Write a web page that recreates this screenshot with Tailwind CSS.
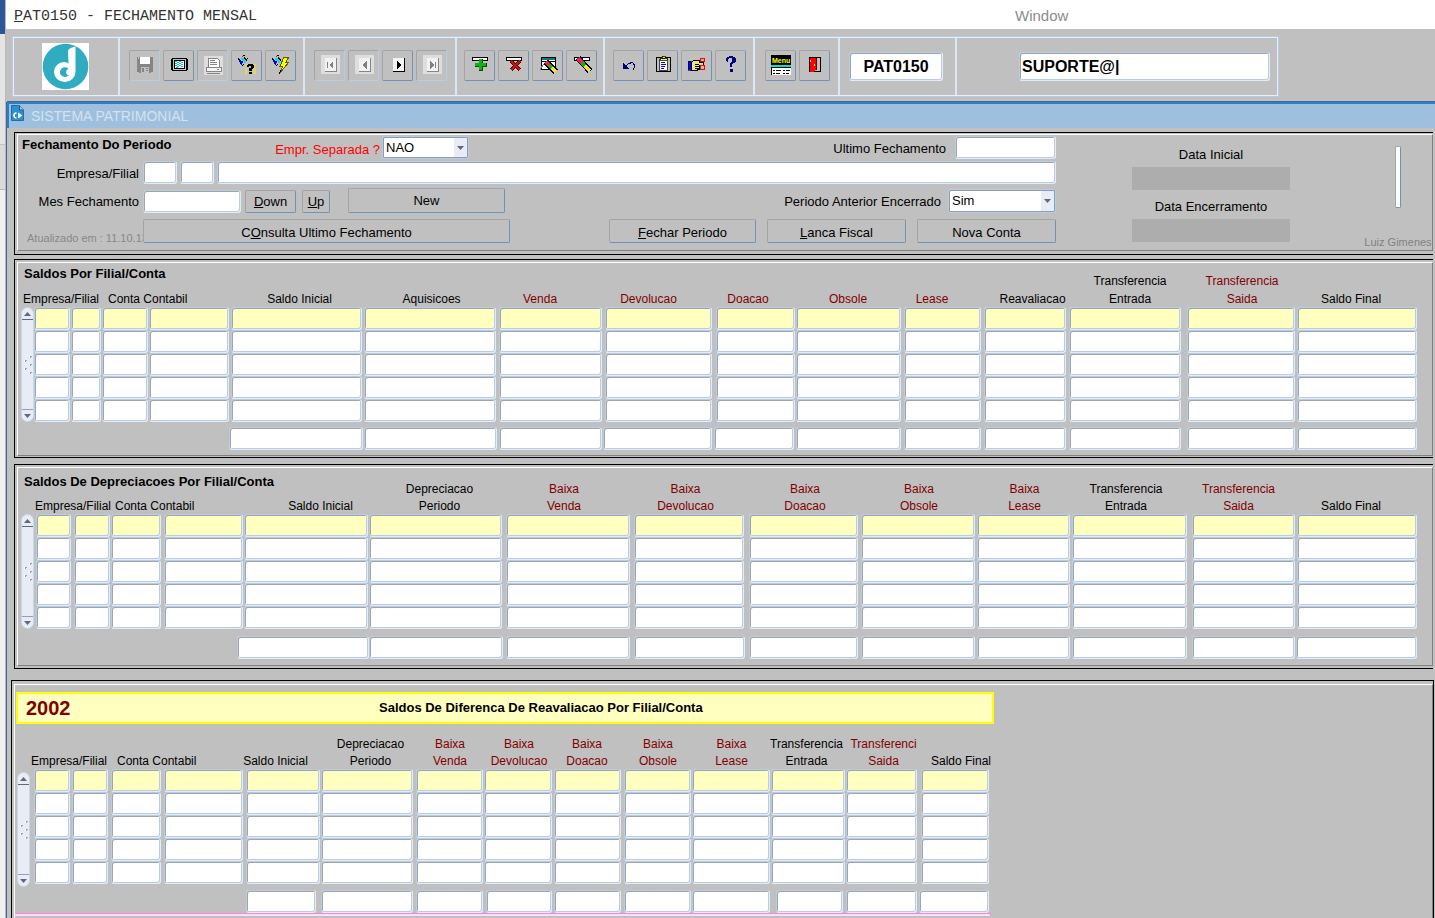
<!DOCTYPE html>
<html lang="pt-BR">
<head>
    <meta charset="UTF-8">
    <meta name="viewport" content="width=device-width, initial-scale=1.0">
    <title>PAT0150 - Fechamento Mensal</title>
    <script src="https://cdn.jsdelivr.net/npm/@tailwindcss/browser@4"></script>
</head>
<body class="flex min-h-screen bg-[#c0c0c0] font-['Liberation_Sans',Arial,sans-serif] text-[13px] leading-4 text-black">
    <!-- Edge of the window behind -->
    <div class="flex w-[6px] shrink-0 flex-col border-r border-[#b8b8b8] bg-[#f0f0f0]">
        <div class="h-[34px] bg-[#2b579a]"></div>
        <div class="h-[111px] border-b border-[#c4c4c4] bg-[#e4e4e4]"></div>
        <div class="h-[45px] border-b border-[#b8b8b8] bg-[#dadada]"></div>
    </div>

    <div class="flex min-w-0 flex-1 flex-col">
        <header class="flex h-[29px] items-center bg-white pl-2">
            <h1 class="w-[1001px] pt-[5px] font-['Liberation_Mono','Courier_New',monospace] text-[15px] text-[#333]"><span class="underline">P</span>AT0150 - FECHAMENTO MENSAL</h1>
            <a href="#" class="pt-[3px] text-[15px] text-[#8c8c8c]">Window</a>
        </header>

        <!-- Toolbar -->
        <div class="mt-[7px] mb-[5px] ml-[6px] flex h-[61px] w-[1267px] border border-[#b8cce4]">
            <div class="flex flex-1 border border-[#e8effa]">
                <div class="flex w-[106px] items-center border-r-2 border-[#dce7f5] pl-[28px]">
                    <svg class="h-[47px] w-[47px] bg-white" viewBox="0 0 47 47" role="img" aria-label="Logo">
                        <circle cx="23.5" cy="23.5" r="22.8" fill="#30acc0"/>
                        <path d="M26 7.500Q27.500 4.500 33.500 3.500V29A10.800 10.300 0 0 1 22.500 39A10.600 10.200 0 0 1 12 29A10.500 10 0 0 1 22 19Q25 19 26.500 20.500Z" fill="#fff"/>
                        <path d="M26.700 26A5 4.800 0 1 0 26.700 32.300A3.300 3.300 0 0 1 24.500 27.500Q25 26 26.700 26Z" fill="#30acc0"/>
                    </svg>
                </div>
                <div class="flex w-[185px] items-center gap-[3px] border-r-2 border-[#dce7f5] pb-[3px] pl-[9px]" data-tools="salvar tela imprimir consultar executar"></div>
                <div class="flex w-[152px] items-center gap-[3px] border-r-2 border-[#dce7f5] pb-[3px] pl-[9px]" data-tools="primeiro anterior proximo ultimo"></div>
                <div class="flex w-[148px] items-center gap-[3px] border-r-2 border-[#dce7f5] pb-[3px] pl-[7px]" data-tools="inserir excluir limparBloco limpar"></div>
                <div class="flex w-[150px] items-center gap-[3px] border-r-2 border-[#dce7f5] pb-[3px] pl-[8px]" data-tools="desfazer lista editar ajuda"></div>
                <div class="flex w-[85px] items-center gap-[3px] border-r-2 border-[#dce7f5] pb-[3px] pl-[10px]" data-tools="menu sair"></div>
                <div class="flex w-[117px] items-center border-r-2 border-[#dce7f5] pl-[9px]">
                    <input aria-label="Programa" value="PAT0150" class="h-[29px] w-[94px] rounded-[3px] border border-t-[#b8cce4] border-r-[#e4ecf8] border-b-[#e4ecf8] border-l-[#b8cce4] bg-white text-center text-[16px] font-bold shadow-[inset_1px_1px_0_#a0a4ac,inset_-1px_-1px_0_#b8cce4]">
                </div>
                <div class="flex flex-1 items-center justify-end pr-[7px]">
                    <input aria-label="Usuario" value="SUPORTE@|" class="h-[29px] w-[251px] rounded-[3px] border border-t-[#b8cce4] border-r-[#e4ecf8] border-b-[#e4ecf8] border-l-[#b8cce4] bg-white px-[2px] text-[16px] font-bold shadow-[inset_1px_1px_0_#a0a4ac,inset_-1px_-1px_0_#b8cce4]">
                </div>
            </div>
        </div>

        <main class="flex flex-1 flex-col border-l border-[#41679f]">
            <div class="flex h-[26px] items-center gap-[7px] border-t-2 border-l-2 border-t-[#2f7fc0] border-l-[#2f7fc0] bg-[#9ec0de] pl-[2px] text-[14px] text-[#d4e2f0] shadow-[0_-1px_0_#41679f]">
                <svg class="mt-px h-4 w-[13px] self-start" viewBox="0 0 13 16" aria-hidden="true">
                    <path d="M0.500 0.500H8.500L12.500 5V15.500H0.500Z" fill="#2e8fd0" stroke="#2070a8"/>
                    <path d="M8.500 0.500V5H12.500" fill="#9ec0de" stroke="#1a5f92"/>
                    <path d="M7 7.500V13.500L11.500 10.500Z" fill="#fff"/>
                    <path d="M5.500 8A2.500 2.500 0 0 0 5.500 13M2 10.500H4" fill="none" stroke="#fff" stroke-width="1.500"/>
                </svg>
                <h2 class="text-[14px]">SISTEMA PATRIMONIAL</h2>
            </div>

            <!-- Fechamento do periodo -->
            <section class="mt-1 mr-[2px] ml-[7px] border-t border-b border-l border-black pt-px pb-[3px] pl-[2px]">
                <div class="flex h-[117px] border border-t-white border-r-[#808080] border-b-[#808080] border-l-white pt-px">
                    <div class="flex min-w-0 flex-1 flex-col">
                        <div class="flex h-[23px] items-center">
                            <h3 class="w-[257px] pb-[6px] pl-1 text-[13px] font-bold">Fechamento Do Periodo</h3>
                            <label for="separada" class="w-[107px] pt-[5px] pr-[2px] text-right whitespace-nowrap text-[#ff0000]">Empr. Separada ?</label>
                            <div class="relative">
                                <select id="separada" class="h-[23px] w-[87px] appearance-none rounded-[2px] border border-[#b8cce4] bg-white pl-[3px] text-[13px] shadow-[inset_1px_1px_0_#8c9cb4,inset_-1px_-1px_0_#8c9cb4]">
                                    <option>NAO</option>
                                    <option>SIM</option>
                                </select>
                                <span class="pointer-events-none absolute top-[2px] right-[2px] flex h-[19px] w-[13px] items-center justify-center bg-[#e8edf5]"><svg class="h-1 w-[7px]" viewBox="0 0 7 4"><path d="M0 0H7L3.500 4Z" fill="#606880"/></svg></span>
                            </div>
                            <label for="ultimo" class="ml-auto pt-[2px] pr-[9px]">Ultimo Fechamento</label>
                            <input id="ultimo" class="h-[23px] w-[101px] rounded-[3px] border border-t-[#b8cce4] border-r-[#e4ecf8] border-b-[#e4ecf8] border-l-[#b8cce4] bg-white shadow-[inset_1px_1px_0_#a0a4ac,inset_-1px_-1px_0_#b8cce4]">
                        </div>
                        <div class="mt-[2px] flex h-[23px] items-center gap-[3px]">
                            <label for="empresa" class="w-[122px] pt-[2px] pr-px text-right">Empresa/Filial</label>
                            <input id="empresa" class="h-[23px] w-[34px] rounded-[3px] border border-t-[#b8cce4] border-r-[#e4ecf8] border-b-[#e4ecf8] border-l-[#b8cce4] bg-white shadow-[inset_1px_1px_0_#a0a4ac,inset_-1px_-1px_0_#b8cce4]">
                            <input aria-label="Filial" class="h-[23px] w-[34px] rounded-[3px] border border-t-[#b8cce4] border-r-[#e4ecf8] border-b-[#e4ecf8] border-l-[#b8cce4] bg-white shadow-[inset_1px_1px_0_#a0a4ac,inset_-1px_-1px_0_#b8cce4]">
                            <input aria-label="Nome da empresa" class="h-[23px] min-w-0 flex-1 rounded-[3px] border border-t-[#b8cce4] border-r-[#e4ecf8] border-b-[#e4ecf8] border-l-[#b8cce4] bg-white shadow-[inset_1px_1px_0_#a0a4ac,inset_-1px_-1px_0_#b8cce4]">
                        </div>
                        <div class="mt-[5px] flex h-6 items-center">
                            <label for="mes" class="w-[125px] pt-[2px] pr-1 text-right">Mes Fechamento</label>
                            <input id="mes" class="h-[23px] w-[98px] rounded-[3px] border border-t-[#b8cce4] border-r-[#e4ecf8] border-b-[#e4ecf8] border-l-[#b8cce4] bg-white shadow-[inset_1px_1px_0_#a0a4ac,inset_-1px_-1px_0_#b8cce4]">
                            <button type="button" class="ml-1 h-[23px] w-[51px] rounded-[2px] border border-t-[#a4a4a4] border-r-[#6f93b8] border-b-[#6f93b8] border-l-[#a4a4a4] pt-[2px]"><span class="underline">D</span>own</button>
                            <button type="button" class="ml-[6px] h-[23px] w-[28px] rounded-[2px] border border-t-[#a4a4a4] border-r-[#6f93b8] border-b-[#6f93b8] border-l-[#a4a4a4] pt-[2px]"><span class="underline">U</span>p</button>
                            <button type="button" class="ml-[18px] h-[25px] w-[157px] self-end rounded-[2px] border border-t-[#a4a4a4] border-r-[#6f93b8] border-b-[#6f93b8] border-l-[#a4a4a4]">New</button>
                            <label for="anterior" class="ml-auto pt-[2px] pr-[7px]">Periodo Anterior Encerrado</label>
                            <div class="relative">
                                <select id="anterior" class="h-6 w-[108px] appearance-none rounded-[2px] border border-[#b8cce4] bg-white pl-[3px] text-[13px] shadow-[inset_1px_1px_0_#8c9cb4,inset_-1px_-1px_0_#8c9cb4]">
                                    <option>Sim</option>
                                    <option>Nao</option>
                                </select>
                                <span class="pointer-events-none absolute top-[2px] right-[2px] flex h-5 w-[13px] items-center justify-center bg-[#e8edf5]"><svg class="h-1 w-[7px]" viewBox="0 0 7 4"><path d="M0 0H7L3.500 4Z" fill="#606880"/></svg></span>
                            </div>
                        </div>
                        <div class="mt-[6px] flex h-6 items-center">
                            <p class="w-[125px] overflow-hidden pt-[14px] pl-[9px] text-[11px] whitespace-nowrap text-[#888]">Atualizado em : 11.10.13</p>
                            <button type="button" class="h-6 w-[367px] rounded-[2px] border border-t-[#a4a4a4] border-r-[#6f93b8] border-b-[#6f93b8] border-l-[#a4a4a4] pt-[3px]">C<span class="underline">O</span>nsulta Ultimo Fechamento</button>
                            <div class="ml-auto flex gap-[11px]">
                                <button type="button" class="h-6 w-[147px] rounded-[2px] border border-t-[#a4a4a4] border-r-[#6f93b8] border-b-[#6f93b8] border-l-[#a4a4a4] pt-[3px]"><span class="underline">F</span>echar Periodo</button>
                                <button type="button" class="h-6 w-[139px] rounded-[2px] border border-t-[#a4a4a4] border-r-[#6f93b8] border-b-[#6f93b8] border-l-[#a4a4a4] pt-[3px]"><span class="underline">L</span>anca Fiscal</button>
                                <button type="button" class="h-6 w-[139px] rounded-[2px] border border-t-[#a4a4a4] border-r-[#6f93b8] border-b-[#6f93b8] border-l-[#a4a4a4] pt-[3px]">Nova Conta</button>
                            </div>
                        </div>
                    </div>
                    <div class="flex w-[376px] shrink-0 justify-between pl-[76px]">
                        <div class="flex w-[158px] flex-col pt-[11px] text-center">
                            <label for="dataInicial">Data Inicial</label>
                            <input id="dataInicial" disabled class="mt-1 h-[23px] w-full bg-[#adadad]">
                            <label for="dataFim" class="mt-[9px]">Data Encerramento</label>
                            <input id="dataFim" disabled class="mt-1 h-[23px] w-full bg-[#adadad]">
                        </div>
                        <div class="flex w-[68px] flex-col items-center justify-between pt-[10px]">
                            <button type="button" aria-label="Progresso" class="h-[62px] w-[6px] rounded-[2px] border border-t-[#a4a4a4] border-r-[#6f93b8] border-b-[#6f93b8] border-l-[#a4a4a4] bg-white"></button>
                            <p class="text-[11px] whitespace-nowrap text-[#808080]">Luiz Gimenes</p>
                        </div>
                    </div>
                </div>
            </section>

            <!-- Saldos por filial/conta -->
            <section class="mt-1 mr-[2px] ml-[7px] border-t border-b border-l border-black pt-[2px] pb-px pl-[2px]">
                <div class="border border-t-white border-r-[#808080] border-b-[#808080] border-l-white pr-[15px] pb-[5px] pl-[3px]" data-grid="saldos"></div>
            </section>

            <!-- Saldos de depreciacoes -->
            <section class="mt-[6px] mr-[2px] ml-[7px] border-t border-b border-l border-black pt-[2px] pb-[2px] pl-[2px]">
                <div class="border border-t-white border-r-[#808080] border-b-[#808080] border-l-white pr-[15px] pb-[6px] pl-[3px]" data-grid="depreciacoes"></div>
            </section>

            <!-- Saldos de diferenca de reavaliacao -->
            <section class="mt-[11px] mr-px ml-1 flex-1 border-t border-r border-l border-black pt-[3px] pl-[2px]">
                <div class="h-full border-t border-r border-l border-t-white border-r-[#808080] border-l-white pt-[7px]">
                    <div class="ml-px flex h-8 w-[978px] items-center border-2 border-[#ffff00] bg-[#ffffc0] pl-2">
                        <span class="w-[353px] text-[20px] leading-7 font-bold text-[#800000]">2002</span>
                        <h3 class="text-[13px] font-bold">Saldos De Diferenca De Reavaliacao Por Filial/Conta</h3>
                    </div>
                    <div class="ml-[2px] w-[972px]" data-grid="reavaliacao"></div>
                    <div class="h-[3px] w-[976px] border-t border-r border-[#f488d8] bg-[#ffdcf8]"></div>
                </div>
            </section>
        </main>
    </div>

    <script>
        // Toolbar icons, drawn on a 20x20 grid
        const tools = {
            salvar: { off: true, svg: '<path d="M2 2H18V17H16V18H4V17H2Z" fill="#858585"/><path d="M5 2H15V9H5Z" fill="#fff"/><path d="M3 2H4V4H3ZM6 12H14V18H6Z" fill="#c0c0c0"/><path d="M7 13H9V17H7ZM11 13H13V14H11ZM11 15H13V16H11Z" fill="#858585"/>' },
            tela: { svg: '<path d="M3 3H18V4H19V15H18V16H3V15H2V4H3Z" fill="#000"/><path d="M4 4H17V15H4Z" fill="#c0c0c0"/><path d="M5 5H16V14H5Z" fill="#000"/><path d="M6 6H15V13H6Z" fill="#e8ffff"/><path d="M6 6H8V7H6ZM10 6H12V7H10ZM8 7H10V8H8ZM12 7H14V8H12ZM6 8H8V9H6ZM10 8H12V9H10ZM8 9H10V10H8ZM12 9H14V10H12ZM6 10H8V11H6ZM10 10H12V11H10ZM8 11H10V12H8ZM12 11H14V12H12ZM7 12H9V13H7Z" fill="#30b0c8"/>' },
            imprimir: { off: true, svg: '<path d="M1 1H20V20H1Z" fill="#dedede"/><path d="M5 3H14L16 5V12H5Z" fill="#fff" stroke="#858585"/><path d="M7 5H12V6H7ZM7 7H14V8H7ZM7 9H14V10H7Z" fill="#858585"/><path d="M3 12.500H18V16.500H3Z" fill="#f4f4f4" stroke="#858585"/><path d="M14 14H16V15H14ZM4 18H17V19H4Z" fill="#858585"/>' },
            consultar: { svg: '<path d="M8 9H19V11H8ZM8 13H10V20H8ZM16 12H19V19H16Z" fill="#d8d860"/><path d="M1 3H2V4H3V5H1ZM7 2H8V3H9V4H10V6H9V5H8V4H7Z" fill="#000"/><path d="M4 3H7V4H8V6H9V8H7V6H5V5H4Z" fill="#00e0f0"/><path d="M2 5H4V6H6V8H5V10H4V9H3V7H2Z" fill="#0000d0"/><path d="M6 0H8V1H6ZM6 9H7V10H6ZM5 10H6V11H5ZM10 3H11V4H10Z" fill="#000"/><path d="M5 1H6V2H5Z" fill="#f00"/><path d="M10 12V10H11V9H16V10H17V13H16V14H15V16H12V13H14V11H12V12ZM12 17H15V19H12Z" fill="#000"/>' },
            executar: { svg: '<path d="M1 3H2V4H3V5H1ZM7 2H8V3H9V4H10V6H9V5H8V4H7Z" fill="#000"/><path d="M4 3H7V4H8V6H9V8H7V6H5V5H4Z" fill="#00e0f0"/><path d="M2 5H4V6H6V8H5V10H4V9H3V7H2Z" fill="#0000d0"/><path d="M6 0H8V1H6ZM6 9H7V10H6ZM5 10H6V11H5Z" fill="#000"/><path d="M5 1H6V2H5Z" fill="#f00"/><path d="M13 2H18L15 7H18L9 18L12 11H9Z" fill="#ff0" stroke="#606000"/><path d="M10 15L8 19" stroke="#000" fill="none"/>' },
            primeiro: { off: true, svg: '<path d="M1 0H20V19H1Z" fill="#dedede"/><path d="M5 3H17V17H5Z" fill="#858585"/><path d="M5 3H16V16H5Z" fill="#f2f2f2"/><path d="M7 7H8V13H7ZM13 6V14L9 10Z" fill="#808080"/>' },
            anterior: { off: true, svg: '<path d="M1 0H20V19H1Z" fill="#dedede"/><path d="M5 3H17V17H5Z" fill="#858585"/><path d="M5 3H16V16H5Z" fill="#f2f2f2"/><path d="M13 6V14L8 10Z" fill="#808080"/>' },
            proximo: { svg: '<path d="M5 3H17V17H5Z" fill="#000"/><path d="M5 3H16V16H5Z" fill="#f4f4f4"/><path d="M9 6V14L14 10Z" fill="#000"/>' },
            ultimo: { off: true, svg: '<path d="M1 0H20V19H1Z" fill="#dedede"/><path d="M5 3H17V17H5Z" fill="#858585"/><path d="M5 3H16V16H5Z" fill="#f2f2f2"/><path d="M8 6V14L12 10ZM13 7H14V13H13Z" fill="#808080"/>' },
            inserir: { svg: '<path d="M2.500 2.500H17.500V5.500H2.500Z" fill="#fff" stroke="#000"/><path d="M9 4H13V8H17V12H13V16H9V12H5V8H9Z" fill="#005000"/><path d="M9 4H12V8H16V11H12V15H9V11H5V8H9Z" fill="#10b010"/>' },
            excluir: { svg: '<path d="M2.500 2.500H17.500V5.500H2.500Z" fill="#fff" stroke="#000"/><path d="M7 6L16 15M16 6L7 15" stroke="#500000" stroke-width="4" fill="none"/><path d="M7 6L16 15M16 6L7 15" stroke="#c01010" stroke-width="2.500" fill="none"/>' },
            limparBloco: { svg: '<path d="M3.500 2.500H17.500V14.500H3.500Z" fill="#fff" stroke="#000"/><path d="M4 3H17V5H4Z" fill="#008080"/><path d="M4 6H17V7H4Z" fill="#000"/><path d="M2 15L5 10L8 9" fill="none" stroke="#808080"/><path d="M8 7L18 17" stroke="#000" stroke-width="6"/><path d="M8 7L12 11" stroke="#f02060" stroke-width="4"/><path d="M11.500 10.500L14 13" stroke="#10b010" stroke-width="4"/><path d="M14 13L18 17" stroke="#f0e040" stroke-width="4"/>' },
            limpar: { svg: '<path d="M2.500 2.500H17.500V5.500H2.500Z" fill="#fff" stroke="#000"/><path d="M6 3L18 16" stroke="#000" stroke-width="6"/><path d="M6 3L10 8" stroke="#f02060" stroke-width="4"/><path d="M10 7.500L13 11" stroke="#10b010" stroke-width="4"/><path d="M13 11L18 16" stroke="#f0e040" stroke-width="4"/>' },
            desfazer: { svg: '<path d="M6 12L8 10Q11 7 14 8Q17 11 14 15" fill="none" stroke="#000080"/><path d="M4 8V14H10Z" fill="#000080"/>' },
            lista: { svg: '<path d="M3.500 2.500H17.500V16.500H3.500Z" fill="#c0c0c0" stroke="#000"/><path d="M6.500 4.500H14.500V15.500H6.500Z" fill="#fff" stroke="#404040"/><path d="M7 3H14V5H7ZM9 1H12V3H9Z" fill="#f0f040" stroke="#000" stroke-width="0.700"/><path d="M8 7H12V8H8ZM8 9H13V10H8ZM8 11H12V12H8ZM8 13H11V14H8Z" fill="#0000ff"/>' },
            editar: { svg: '<path d="M1 6H4V15H1Z" fill="#0000ff" stroke="#000" stroke-width="0.600"/><path d="M4 8L7 5H12V7H16V10H12V14H10V15H4Z" fill="#e8e880" stroke="#000"/><path d="M8 9H12M8 11H12M8 13H12" stroke="#000"/><path d="M13.500 3.500H17.500V6.500H13.500ZM13.500 10.500H17.500V14.500H13.500Z" fill="none" stroke="#f00"/>' },
            ajuda: { svg: '<path d="M5 6V3H6V2H8V1H12V2H14V3H15V7H14V8H12V9H11V12H9V8H10V7H11V3H8V4H7V7H6V6ZM9 14H12V17H9Z" fill="#000080"/>' },
            menu: { svg: '<path d="M0 0H20V10H0Z" fill="#000"/><text x="1" y="8" font-size="7" font-weight="bold" fill="#ff0">Menu</text><path d="M0 10H20V12H0Z" fill="#00e0e0"/><path d="M0 12H20V20H0Z" fill="#fff"/><path d="M0 12H20V13H0ZM0 13H1V20H0ZM2 15H4V16H2ZM5 15H10V16H5ZM12 15H14V16H12ZM15 15H19V16H15ZM2 18H4V19H2ZM5 18H9V19H5ZM12 18H14V19H12ZM15 18H18V19H15Z" fill="#000"/>' },
            sair: { svg: '<path d="M4.500 2.500H15.500V16.500H4.500Z" fill="#c0c0c0" stroke="#000"/><path d="M5 3H11V15L8 17H5Z" fill="#f00"/><path d="M11 3H12V15H11Z" fill="#700000"/><path d="M5 5H6V7H5ZM9 9H10V11H9Z" fill="#ff0"/>' }
        };

        document.querySelectorAll('[data-tools]').forEach(group => {
            group.innerHTML = group.dataset.tools.split(' ').map(name => `
                <button type="button" aria-label="${name}" class="flex h-[31px] w-[31px] items-center justify-center rounded-[2px] border border-t-[#a4a4a4] border-l-[#a4a4a4] ${tools[name].off ? 'border-r-[#b8cce4] border-b-[#b8cce4]' : 'border-r-[#6f93b8] border-b-[#6f93b8]'}">
                    <svg class="h-5 w-5" viewBox="0 0 20 20" shape-rendering="crispEdges" aria-hidden="true">${tools[name].svg}</svg>
                </button>`).join('');
        });

        // Columns: [first header line, second header line, field width, gap after, red, header padding]
        // totals: [gap before, field width]
        const grids = {
            saldos: {
                title: 'Saldos Por Filial/Conta',
                topRow: 'h-[26px]', bottomRow: 'h-[18px]', totalsRow: 'mt-[5px]', bar: 13, barTop: '',
                titleTop: 'pt-[3px]', empresa: 'text-left pl-[2px]', conta: 'pl-[6px]',
                keys: [[36, 1], [30, 1], [46, 1], [80, 2]],
                cols: [
                    ['', 'Saldo Inicial', 131, 2, false, 'pl-1'],
                    ['', 'Aquisicoes', 132, 3, false, ''],
                    ['', 'Venda', 103, 3, true, 'pr-6'],
                    ['', 'Devolucao', 107, 4, true, 'pr-6'],
                    ['', 'Doacao', 79, 1, true, 'pr-4'],
                    ['', 'Obsole', 105, 3, true, 'pr-1'],
                    ['', 'Lease', 77, 3, true, 'pr-6'],
                    ['', 'Reavaliacao', 82, 3, false, 'pl-3'],
                    ['Transferencia', 'Entrada', 112, 6, false, 'pl-1'],
                    ['Transferencia', 'Saida', 108, 2, true, ''],
                    ['', 'Saldo Final', 120, 0, false, 'pr-3']
                ],
                totals: [[208, 134], [1, 133], [2, 103], [1, 109], [2, 80], [2, 105], [3, 77], [3, 82], [3, 112], [6, 108], [2, 120]]
            },
            depreciacoes: {
                title: 'Saldos De Depreciacoes Por Filial/Conta',
                topRow: 'h-[29px]', bottomRow: 'h-[17px]', totalsRow: 'mt-[7px]', bar: 15, barTop: '',
                titleTop: 'pt-[6px]', empresa: 'text-right', conta: 'pl-1',
                keys: [[35, 3], [36, 1], [50, 3], [79, 1]],
                cols: [
                    ['', 'Saldo Inicial', 124, 1, false, 'pl-7'],
                    ['Depreciacao', 'Periodo', 133, 4, false, 'pl-1'],
                    ['Baixa', 'Venda', 124, 4, true, 'pr-3'],
                    ['Baixa', 'Devolucao', 110, 5, true, 'pr-3'],
                    ['Baixa', 'Doacao', 109, 3, true, ''],
                    ['Baixa', 'Obsole', 114, 2, true, ''],
                    ['Baixa', 'Lease', 93, 2, true, ''],
                    ['Transferencia', 'Entrada', 115, 5, false, 'pr-3'],
                    ['Transferencia', 'Saida', 103, 2, true, 'pr-3'],
                    ['', 'Saldo Final', 120, 0, false, 'pr-3']
                ],
                totals: [[216, 132], [0, 134], [3, 124], [4, 111], [4, 109], [3, 114], [2, 93], [2, 115], [5, 103], [1, 121]]
            },
            reavaliacao: {
                title: '',
                topRow: 'h-[28px]', bottomRow: 'h-[17px]', totalsRow: 'mt-[6px]', bar: 17, barTop: 'mt-[3px] -mb-[3px]',
                titleTop: '', empresa: 'text-right pr-[4px]', conta: 'pl-[6px]',
                keys: [[36, 2], [36, 3], [50, 3], [79, 3]],
                cols: [
                    ['', 'Saldo Inicial', 74, 1, false, 'pr-4'],
                    ['Depreciacao', 'Periodo', 92, 3, false, 'pl-1'],
                    ['Baixa', 'Venda', 67, 1, true, ''],
                    ['Baixa', 'Devolucao', 68, 2, true, ''],
                    ['Baixa', 'Doacao', 67, 3, true, 'pr-1'],
                    ['Baixa', 'Obsole', 67, 1, true, ''],
                    ['Baixa', 'Lease', 78, 1, true, ''],
                    ['Transferencia', 'Entrada', 74, 1, false, 'pr-1'],
                    ['Transferenci', 'Saida', 71, 4, true, ''],
                    ['', 'Saldo Final', 68, 0, false, 'pl-3']
                ],
                totals: [[229, 70], [5, 92], [3, 67], [3, 66], [2, 67], [3, 67], [1, 78], [6, 67], [3, 71], [2, 70]]
            }
        };

        const field = 'block h-[23px] w-full min-w-0 rounded-[3px] border border-t-[#b8cce4] border-r-[#e4ecf8] border-b-[#e4ecf8] border-l-[#b8cce4] px-1 shadow-[inset_1px_1px_0_#a0a4ac,inset_-1px_-1px_0_#b8cce4]';

        const scrollBar = top => `
            <div class="flex h-[115px] w-[13px] flex-col items-center justify-between rounded-full border border-[#c8d8ec] bg-[#e8edf5] ${top}">
                <span class="flex h-3 w-full items-center justify-center border-b border-[#606880]"><svg class="h-1 w-[7px]" viewBox="0 0 7 4"><path d="M0 4H7L3.500 0Z" fill="#606880"/></svg></span>
                <svg class="h-5 w-[10px]" viewBox="0 0 10 20" shape-rendering="crispEdges"><path d="M7 1H9V2H8V3H7ZM2 5H4V6H3V7H2ZM7 9H9V10H8V11H7ZM2 13H4V14H3V15H2ZM7 17H9V18H8V19H7Z" fill="#8ca0c0"/><path d="M6 1H7V3H6ZM1 5H2V7H1ZM6 9H7V11H6ZM1 13H2V15H1ZM6 17H7V19H6Z" fill="#fff"/></svg>
                <span class="flex h-3 w-full items-center justify-center border-t border-[#8ca0c0]"><svg class="h-1 w-[7px]" viewBox="0 0 7 4"><path d="M0 0H7L3.500 4Z" fill="#606880"/></svg></span>
            </div>`;

        document.querySelectorAll('[data-grid]').forEach(box => {
            const g = grids[box.dataset.grid];
            const sizes = g.keys.concat(g.cols.map(c => [c[2], c[3]]));
            const names = ['Empresa', 'Filial', 'Conta', 'Descricao'].concat(g.cols.map(c => (c[0] + ' ' + c[1]).trim()));

            const head = line => g.cols.map(c => `<th class="p-0 align-bottom text-[12px] font-normal whitespace-nowrap ${c[4] ? 'text-[#800000]' : ''}"><div class="-mx-2 text-center leading-[15px] ${c[5]}">${c[line]}</div></th>`);
            const row = i => `<tr>
                ${i === 0 ? `<td rowspan="5" class="p-0 align-top">${scrollBar(g.barTop)}</td>` : ''}
                ${sizes.map((s, n) => `<td class="p-0" style="padding-right:${s[1]}px"><input aria-label="${names[n]} ${i + 1}" class="${field} ${i === 0 ? 'bg-[#ffffc0]' : 'bg-white'}"></td>`).join('')}
            </tr>`;

            box.innerHTML = `
                <table class="w-full table-fixed border-collapse">
                    <colgroup><col style="width:${g.bar}px">${sizes.map(s => `<col style="width:${s[0] + s[1]}px">`).join('')}</colgroup>
                    <thead>
                        <tr class="${g.topRow}">
                            <th colspan="5" class="p-0 pl-[3px] text-left align-top text-[13px] leading-4 font-bold whitespace-nowrap ${g.titleTop}">${g.title}</th>
                            ${head(0).join('')}
                        </tr>
                        <tr class="${g.bottomRow}">
                            <th colspan="3" class="p-0 align-bottom text-[12px] leading-[15px] font-normal whitespace-nowrap ${g.empresa}">Empresa/Filial</th>
                            <th colspan="2" class="p-0 text-left align-bottom text-[12px] leading-[15px] font-normal whitespace-nowrap ${g.conta}">Conta Contabil</th>
                            ${head(1).join('')}
                        </tr>
                    </thead>
                    <tbody>${[0, 1, 2, 3, 4].map(row).join('')}</tbody>
                </table>
                <div class="grid ${g.totalsRow}" style="grid-template-columns:${g.totals.map(t => t[0] + 'fr ' + t[1] + 'fr').join(' ')}">
                    ${g.totals.map((t, n) => `<span></span><input aria-label="Total ${names[n + 4]}" class="${field} bg-white">`).join('')}
                </div>`;
        });
    </script>
</body>
</html>
